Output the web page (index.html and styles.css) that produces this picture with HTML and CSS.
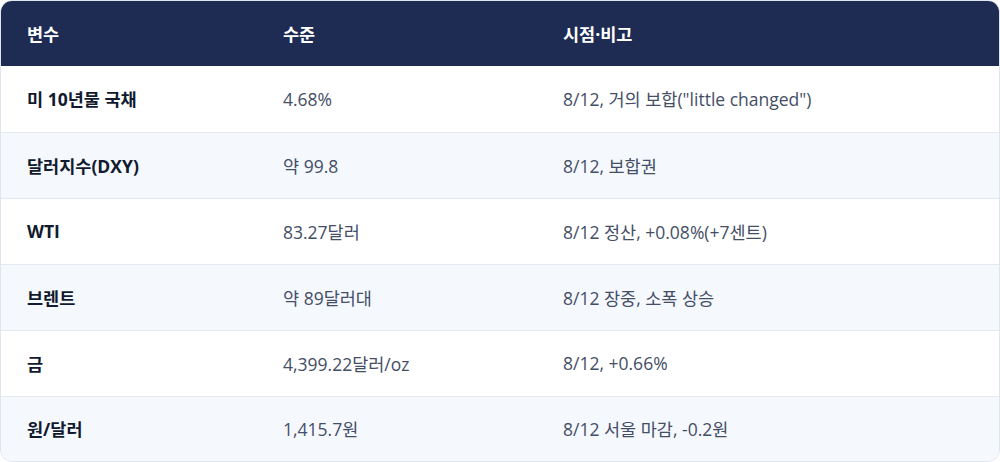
FILE: index.html
```html
<!DOCTYPE html>
<html lang="ko">
<head>
<meta charset="utf-8">
<link rel="stylesheet" href="styles.css">
</head>
<body>
<div class="card">
<table class="tbl">
<thead>
<tr><th class="c1">변수</th><th class="c2">수준</th><th class="c3">시점·비고</th></tr>
</thead>
<tbody>
<tr><td class="name">미 10년물 국채</td><td>4.68%</td><td>8/12, 거의 보합("little changed")</td></tr>
<tr class="alt"><td class="name">달러지수(DXY)</td><td>약 99.8</td><td>8/12, 보합권</td></tr>
<tr><td class="name">WTI</td><td>83.27달러</td><td>8/12 정산, +0.08%(+7센트)</td></tr>
<tr class="alt"><td class="name">브렌트</td><td>약 89달러대</td><td>8/12 장중, 소폭 상승</td></tr>
<tr><td class="name">금</td><td>4,399.22달러/oz</td><td>8/12, +0.66%</td></tr>
<tr class="alt last"><td class="name">원/달러</td><td>1,415.7원</td><td>8/12 서울 마감, -0.2원</td></tr>
</tbody>
</table>
</div>
</body>
</html>
```
FILE: styles.css
```css
html, body {
  margin: 0;
  padding: 0;
  background: #ffffff;
}
body {
  font-family: "Open Sans", "Noto Sans CJK KR", sans-serif;
  font-size: 17.5px;
}
.card {
  width: 998px;
  border: 1px solid #dfe5ef;
  border-radius: 12px;
  overflow: hidden;
}
.tbl {
  width: 100%;
  border-collapse: collapse;
  table-layout: fixed;
}
.tbl th {
  background: #1e2b52;
  color: #ffffff;
  font-weight: 700;
  text-align: left;
  height: 65px;
  padding: 0 0 0 26px;
  box-sizing: border-box;
}
.c1 { width: 256px; }
.c2 { width: 280px; }
.tbl td {
  height: 66px;
  padding: 0 0 0 26px;
  box-sizing: border-box;
  color: #444e66;
  border-bottom: 1px solid #e3e8f2;
}
.tbl tr.last td { border-bottom: none; height: 65px; }
.tbl tr.alt td { background: #f5f8fd; }
.tbl td.name {
  color: #111a2e;
  font-weight: 700;
}
```
